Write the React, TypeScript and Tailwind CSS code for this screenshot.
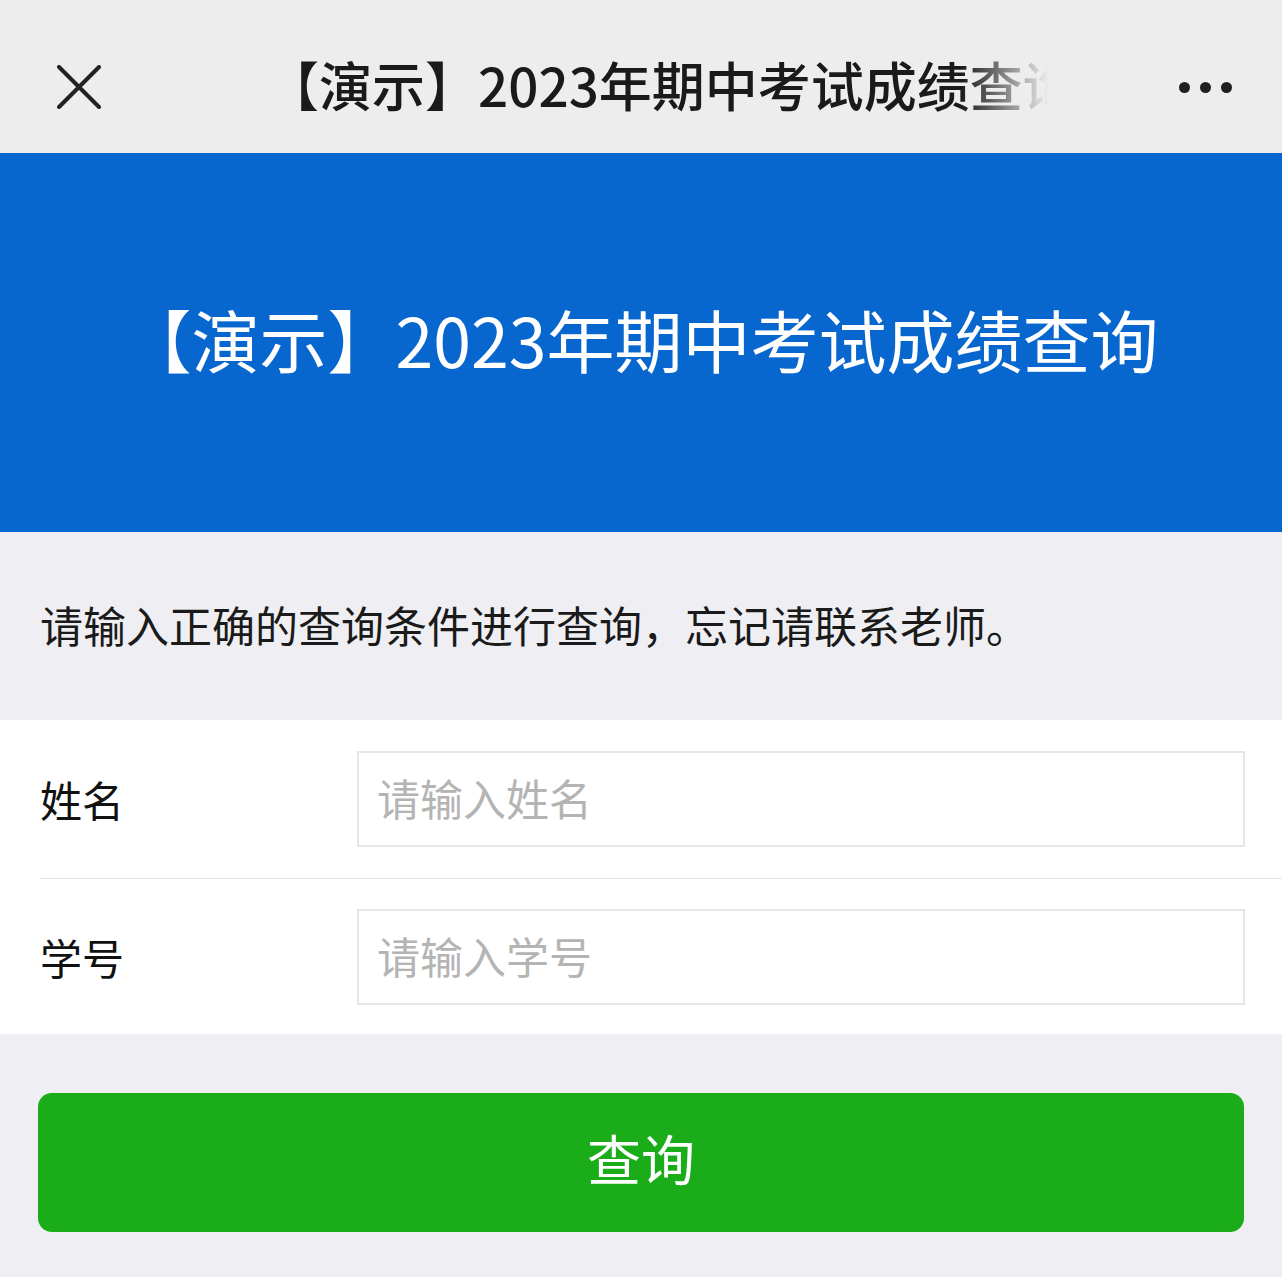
import { useState } from "react";

const cjk = "font-['Noto_Sans_CJK_SC','Noto_Sans',sans-serif]";

function CloseIcon() {
  return (
    <svg width="44" height="44" viewBox="0 0 44 44" fill="none" aria-hidden="true">
      <path d="M2 2L42 42M42 2L2 42" stroke="#222" strokeWidth="4" strokeLinecap="round" />
    </svg>
  );
}

function FormRow({
  label,
  placeholder,
  value,
  onChange,
  className = "",
}: {
  label: string;
  placeholder: string;
  value: string;
  onChange: (v: string) => void;
  className?: string;
}) {
  return (
    <div className={`flex items-center pr-[37px] ${className}`}>
      <label className="w-[317px] shrink-0 text-[42px] leading-none text-[#111]">{label}</label>
      <input
        value={value}
        onChange={(e) => onChange(e.target.value)}
        placeholder={placeholder}
        className={`h-[96px] flex-1 border-2 border-[#e6e6e6] bg-white px-[18px] pb-[4px] text-[43px] text-[#111] outline-none placeholder:text-[#b4b4b4] ${cjk}`}
      />
    </div>
  );
}

export default function App() {
  const [name, setName] = useState("");
  const [no, setNo] = useState("");

  return (
    <div className={`min-h-[1277px] w-full bg-[#efeff3] ${cjk}`}>
      {/* Top bar */}
      <div className="flex h-[153px] items-center bg-[#ededed] pl-[57px] pr-[50px] pt-[21px]">
        <CloseIcon />
        <div className="ml-[165px] w-[790px] overflow-hidden whitespace-nowrap pb-[6px] text-[53px] font-medium leading-none text-[#1a1a1a] [mask-image:linear-gradient(to_right,black_88%,transparent_99%)]">
          【演示】2023年期中考试成绩查询
        </div>
        <div className="ml-auto flex items-center gap-[10px]">
          <span className="h-[11px] w-[11px] rounded-full bg-[#1f1f1f]" />
          <span className="h-[11px] w-[11px] rounded-full bg-[#1f1f1f]" />
          <span className="h-[11px] w-[11px] rounded-full bg-[#1f1f1f]" />
        </div>
      </div>

      {/* Banner */}
      <div className="flex h-[379px] items-center justify-center bg-[#0866cf] pb-[8px]">
        <h1 className="whitespace-nowrap text-[68px] font-normal leading-none text-white">
          【演示】2023年期中考试成绩查询
        </h1>
      </div>

      {/* Hint */}
      <div className="flex h-[188px] items-center pb-[4px] pl-[40px]">
        <p className="text-[43px] leading-none text-[#1a1a1a]">请输入正确的查询条件进行查询，忘记请联系老师。</p>
      </div>

      {/* Form */}
      <div className="bg-white pl-[40px]">
        <FormRow label="姓名" placeholder="请输入姓名" value={name} onChange={setName} className="pb-[31px] pt-[31px]" />
        <div className="h-px bg-[#e6e6e6]" />
        <FormRow label="学号" placeholder="请输入学号" value={no} onChange={setNo} className="pb-[29px] pt-[30px]" />
      </div>

      {/* Submit */}
      <div className="px-[38px] pb-[46px] pt-[59px]">
        <button
          type="button"
          className="flex h-[139px] w-full items-center justify-center rounded-[14px] bg-[#1aad19] pb-[10px] text-[54px] leading-none text-white"
        >
          查询
        </button>
      </div>
    </div>
  );
}
